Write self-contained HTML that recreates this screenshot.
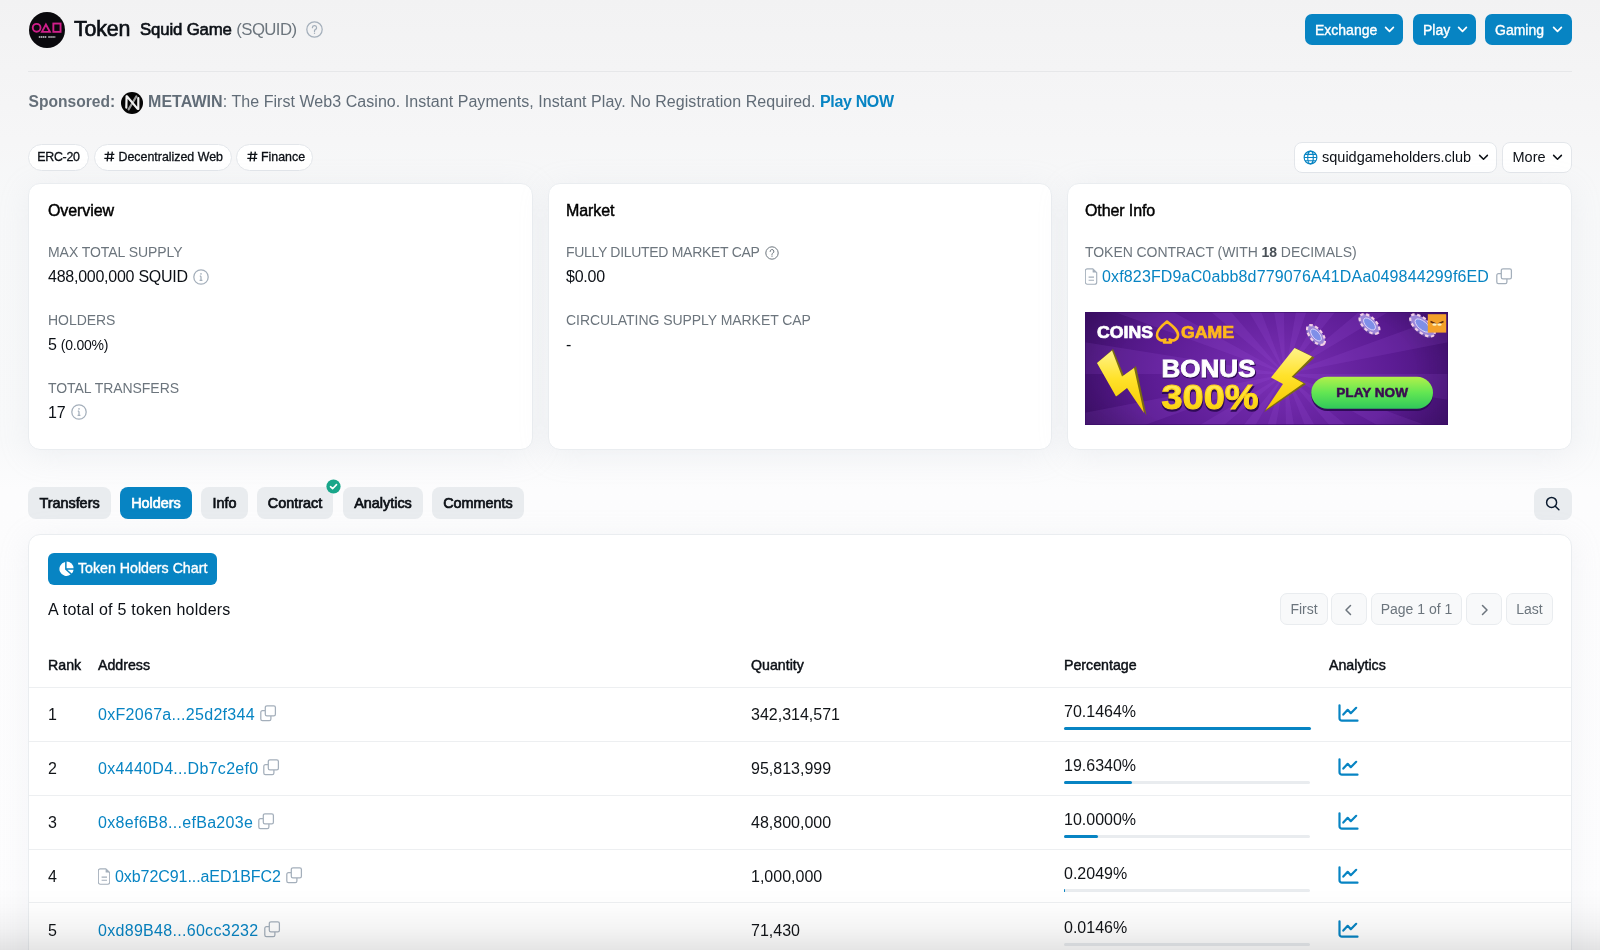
<!DOCTYPE html>
<html><head><meta charset="utf-8">
<style>
*{box-sizing:border-box;margin:0;padding:0}
html,body{width:1600px;height:950px;overflow:hidden}
body{font-family:"Liberation Sans",sans-serif;color:#081d35;position:relative;
background:linear-gradient(to bottom,#f2f2f3 0px,#f4f4f5 70px,#f6f6f7 140px,#f7f8f9 200px,#f8f9fa 440px,#fcfcfd 490px,#fdfdfe 950px)}
.a{position:absolute;white-space:nowrap}
.btnb{position:absolute;background:#0784c3;color:#fff;border-radius:7px;font-weight:normal;-webkit-text-stroke:0.35px #fff;font-size:14px;height:31px;line-height:32px;padding-left:10px}
.chev{position:absolute;width:7px;height:7px;border-right:1.6px solid currentColor;border-bottom:1.6px solid currentColor;transform:rotate(45deg)}
.pill{position:absolute;background:#fff;border:1px solid #e3e6ea;border-radius:14px;height:27px;top:143.5px;font-size:12.4px;font-weight:normal;-webkit-text-stroke:0.3px #0c1016;line-height:25px;color:#0c1016}
.hash{display:inline-block;font-size:14px;transform:skewX(-8deg);margin-right:1px}
.card{position:absolute;background:#fff;border:1px solid #eaedf0;border-radius:12px;box-shadow:0 5px 30px rgba(189,197,209,0.17)}
.ttl{position:absolute;font-size:16px;font-weight:normal;-webkit-text-stroke:0.45px #000;color:#000;letter-spacing:-0.1px}
.lbl{position:absolute;font-size:14px;color:#6c757d;letter-spacing:-0.05px;white-space:nowrap}
.val{position:absolute;font-size:16px;color:#0c1016;white-space:nowrap;letter-spacing:-0.25px}
.tab{position:absolute;top:487px;height:32.4px;background:#e9ecef;border-radius:8px;font-size:14.4px;font-weight:normal;-webkit-text-stroke:0.7px currentColor;line-height:32.4px;text-align:center;color:#0c1016}
.pg{position:absolute;top:593px;height:32px;background:#f8f9fa;border:1px solid #e9ecef;border-radius:7px;color:#6c757d;font-size:14px;line-height:31px;text-align:center}
.th{position:absolute;top:656.5px;font-size:14.2px;font-weight:normal;-webkit-text-stroke:0.45px #0c1016;color:#0c1016}
.rowline{position:absolute;left:29px;width:1542px;height:1px;background:#edeff1}
.cell{position:absolute;font-size:16px;color:#111418;white-space:nowrap;margin-top:0.6px}
.addr{color:#0784c3}
.bar{position:absolute;left:1064px;width:246px;height:3px;background:#e9ecef;border-radius:2px}
.bar i{position:absolute;left:0;top:0;height:3px;background:#0784c3;border-radius:2px}
</style></head><body><div id="wrap" style="position:absolute;left:0;top:0;width:1600px;height:950px;will-change:transform">

<!-- header -->
<div class="a" style="left:28.6px;top:11.5px;width:36.3px;height:36.3px;border-radius:50%;background:#0a090d">
  <svg width="36.3" height="36.3" viewBox="0 0 36.3 36.3" style="position:absolute;left:0;top:0">
    <circle cx="7.65" cy="15.8" r="3.9" fill="none" stroke="#cf1f8a" stroke-width="1.9"/>
    <path d="M12.9 19.9 L16.9 12.6 L20.9 19.9 Z" fill="none" stroke="#cf1f8a" stroke-width="1.9" stroke-linejoin="miter"/>
    <rect x="24.35" y="11.55" width="7.2" height="8.3" fill="none" stroke="#cf1f8a" stroke-width="1.9"/>
    <path d="M9.8 25 h16.5" stroke="#a0a0a4" stroke-width="1.9" stroke-dasharray="1.6 0.5 1.4 0.5 1.5 0.5 1.5 2 1.5 0.5 1.5 0.5 1.5 0.5 1.5"/>
  </svg>
</div>
<div class="a" style="left:74px;top:17px;font-size:21.4px;color:#0c1016;-webkit-text-stroke:0.65px #0c1016;letter-spacing:-0.15px">Token</div>
<div class="a" style="left:140px;top:20px;font-size:16.8px;color:#0c1016;-webkit-text-stroke:0.6px #0c1016;letter-spacing:-0.15px">Squid Game <span style="-webkit-text-stroke:0;color:#6c757d;letter-spacing:-0.6px">(SQUID)</span></div>
<svg class="a" style="left:306px;top:20.5px" width="17" height="17" viewBox="0 0 17 17"><circle cx="8.5" cy="8.5" r="7.7" fill="none" stroke="#a4afbb" stroke-width="1.25"/><path d="M6.4 6.7a2.1 2.1 0 1 1 2.9 1.9c-.5.3-.8.6-.8 1.2v.6" fill="none" stroke="#a4afbb" stroke-width="1.25" stroke-linecap="round"/><circle cx="8.5" cy="12.3" r=".7" fill="#a4afbb"/></svg>

<div class="btnb" style="left:1305px;top:14px;width:98px">Exchange</div><svg class="a" style="left:1384px;top:26px" width="11" height="7" viewBox="0 0 11 7"><path d="M1.6 1.4 L5.5 5.3 L9.4 1.4" fill="none" stroke="#fff" stroke-width="1.7" stroke-linecap="round" stroke-linejoin="round"/></svg>
<div class="btnb" style="left:1413px;top:14px;width:63px">Play</div><svg class="a" style="left:1457px;top:26px" width="11" height="7" viewBox="0 0 11 7"><path d="M1.6 1.4 L5.5 5.3 L9.4 1.4" fill="none" stroke="#fff" stroke-width="1.7" stroke-linecap="round" stroke-linejoin="round"/></svg>
<div class="btnb" style="left:1485px;top:14px;width:87px">Gaming</div><svg class="a" style="left:1552px;top:26px" width="11" height="7" viewBox="0 0 11 7"><path d="M1.6 1.4 L5.5 5.3 L9.4 1.4" fill="none" stroke="#fff" stroke-width="1.7" stroke-linecap="round" stroke-linejoin="round"/></svg>

<div class="a" style="left:28px;top:71px;width:1544px;height:1px;background:#e6e7e9"></div>

<!-- sponsored -->
<div class="a" style="left:28.5px;top:92px;font-size:15.6px;color:#656f79;line-height:20px;font-weight:bold">Sponsored:</div>
<div class="a" style="left:120.8px;top:91.8px;width:22px;height:22px;border-radius:50%;background:#050505">
  <svg width="22" height="22" viewBox="0 0 22 22" style="position:absolute;left:0;top:0"><path d="M15.4 4.4 L7.6 17.4" stroke="#9c9c9c" stroke-width="2.1" stroke-linecap="round"/><path d="M5.6 4.3 L5.3 15.6 M5.9 4.3 L16.6 16.9 M17.3 6 L17.3 16.9" fill="none" stroke="#f2f2f2" stroke-width="2.2" stroke-linecap="round" stroke-linejoin="round"/></svg>
</div>
<div class="a" style="left:148px;top:92px;font-size:16px;color:#616c77;line-height:20px;letter-spacing:0.05px"><b>METAWIN</b>: The First Web3 Casino. Instant Payments, Instant Play. No Registration Required. <span style="color:#0784c3;font-weight:bold;letter-spacing:-0.35px">Play NOW</span></div>

<!-- pills -->
<div class="pill" style="left:28px;width:61px;text-align:center;letter-spacing:-0.3px">ERC-20</div>
<div class="pill" style="left:94px;width:138px;padding-left:9px;line-height:24px"><svg style="display:inline-block;vertical-align:-1px;margin-right:3.5px" width="11" height="11" viewBox="0 0 11 11"><path d="M4.3 0.6 L3.1 10.4 M8.3 0.6 L7.1 10.4 M0.6 3.4 H10.4 M0.3 7.4 H10.1" fill="none" stroke="#0c1016" stroke-width="1.35"/></svg>Decentralized Web</div>
<div class="pill" style="left:236px;width:77px;padding-left:9.5px;line-height:24px"><svg style="display:inline-block;vertical-align:-1px;margin-right:3.5px" width="11" height="11" viewBox="0 0 11 11"><path d="M4.3 0.6 L3.1 10.4 M8.3 0.6 L7.1 10.4 M0.6 3.4 H10.4 M0.3 7.4 H10.1" fill="none" stroke="#0c1016" stroke-width="1.35"/></svg>Finance</div>

<div class="pill" style="left:1294px;top:141.5px;height:31px;line-height:29px;width:203px;border-radius:8px;font-size:14.5px;padding-left:27px;-webkit-text-stroke:0">squidgameholders.club
  <svg style="position:absolute;left:8px;top:7px" width="15" height="15" viewBox="0 0 16 16"><g fill="none" stroke="#0784c3" stroke-width="1.2"><circle cx="8" cy="8" r="6.8"/><ellipse cx="8" cy="8" rx="3" ry="6.8"/><path d="M1.2 8h13.6M2.2 4.6h11.6M2.2 11.4h11.6"/></g></svg>
</div><svg class="a" style="left:1478px;top:154px" width="11" height="7" viewBox="0 0 11 7"><path d="M1.6 1.4 L5.5 5.3 L9.4 1.4" fill="none" stroke="#0c1016" stroke-width="1.5" stroke-linecap="round" stroke-linejoin="round"/></svg>
<div class="pill" style="left:1502px;top:141.5px;height:31px;line-height:29px;width:70px;border-radius:8px;font-size:14.5px;padding-left:9.5px;-webkit-text-stroke:0">More</div><svg class="a" style="left:1552px;top:154px" width="11" height="7" viewBox="0 0 11 7"><path d="M1.6 1.4 L5.5 5.3 L9.4 1.4" fill="none" stroke="#0c1016" stroke-width="1.5" stroke-linecap="round" stroke-linejoin="round"/></svg>

<!-- cards -->
<div class="card" style="left:28px;top:182.5px;width:505px;height:267.5px"></div>
<div class="card" style="left:548px;top:182.5px;width:504px;height:267.5px"></div>
<div class="card" style="left:1066.5px;top:182.5px;width:505.5px;height:267.5px"></div>

<div class="ttl" style="left:48px;top:202px">Overview</div>
<div class="lbl" style="left:48px;top:244px">MAX TOTAL SUPPLY</div>
<div class="val" style="left:48px;top:268px">488,000,000 SQUID</div><svg class="a" style="left:193px;top:269px" width="16" height="16" viewBox="0 0 16 16"><circle cx="8" cy="8" r="7.2" fill="none" stroke="#a4afbb" stroke-width="1.25"/><path d="M8 7.2v4.2 M6.6 11.4h2.8 M6.8 7.2h1.2" fill="none" stroke="#a4afbb" stroke-width="1.25"/><circle cx="8" cy="4.9" r=".8" fill="#a4afbb"/></svg>
<div class="lbl" style="left:48px;top:312px">HOLDERS</div>
<div class="val" style="left:48px;top:336px">5 <span style="font-size:14px">(0.00%)</span></div>
<div class="lbl" style="left:48px;top:380px">TOTAL TRANSFERS</div>
<div class="val" style="left:48px;top:404px">17</div><svg class="a" style="left:70.5px;top:404px" width="16" height="16" viewBox="0 0 16 16"><circle cx="8" cy="8" r="7.2" fill="none" stroke="#a4afbb" stroke-width="1.25"/><path d="M8 7.2v4.2 M6.6 11.4h2.8 M6.8 7.2h1.2" fill="none" stroke="#a4afbb" stroke-width="1.25"/><circle cx="8" cy="4.9" r=".8" fill="#a4afbb"/></svg>

<div class="ttl" style="left:566px;top:202px">Market</div>
<div class="lbl" style="left:566px;top:244px;letter-spacing:-0.3px">FULLY DILUTED MARKET CAP</div><svg class="a" style="left:764.5px;top:245.5px" width="14" height="14" viewBox="0 0 14 14"><circle cx="7" cy="7" r="6.2" fill="none" stroke="#6c757d" stroke-width="1"/><path d="M5.1 5.5a1.9 1.9 0 1 1 2.6 1.7c-.45.25-.7.55-.7 1.05v.5" fill="none" stroke="#6c757d" stroke-width="1" stroke-linecap="round"/><circle cx="7" cy="10.2" r=".6" fill="#6c757d"/></svg>
<div class="val" style="left:566px;top:268px">$0.00</div>
<div class="lbl" style="left:566px;top:312px">CIRCULATING SUPPLY MARKET CAP</div>
<div class="val" style="left:566px;top:336px">-</div>

<div class="ttl" style="left:1085px;top:202px">Other Info</div>
<div class="lbl" style="left:1085px;top:244px">TOKEN CONTRACT (WITH <b style="color:#495057">18</b> DECIMALS)</div>
<svg class="a" style="left:1085px;top:268px" width="12.5" height="17" viewBox="0 0 12.5 17"><path d="M2.3 0.8h5.6l3.8 3.8v9.6a2 2 0 0 1-2 2H2.3a2 2 0 0 1-2-2V2.8a2 2 0 0 1 2-2z" fill="none" stroke="#a4afbb" stroke-width="1.15" stroke-linejoin="round"/><path d="M7.6 0.9v3.1a.6.6 0 0 0 .6.6h3.3z" fill="#a4afbb"/><path d="M3.6 9.1h5.4 M3.6 12.2h5.4" stroke="#a4afbb" stroke-width="1.1"/></svg><div class="val addr" style="left:1102px;top:268px;letter-spacing:0.15px">0xf823FD9aC0abb8d779076A41DAa049844299f6ED</div><svg class="a" style="left:1496px;top:268px" width="17" height="17" viewBox="0 0 17 17"><path d="M6.9 0.8h6.9a1.6 1.6 0 0 1 1.6 1.6v6.9a1.6 1.6 0 0 1-1.6 1.6H6.9a1.6 1.6 0 0 1-1.6-1.6V2.4a1.6 1.6 0 0 1 1.6-1.6z M5.3 5.6H2.4a1.6 1.6 0 0 0-1.6 1.6v6.9a1.6 1.6 0 0 0 1.6 1.6h6.9a1.6 1.6 0 0 0 1.6-1.6V10.9" fill="none" stroke="#a4afbb" stroke-width="1.25"/></svg>

<!-- banner -->
<svg class="a" style="left:1085px;top:312px" width="363" height="113" viewBox="0 0 363 113">
<defs>
<radialGradient id="bg1" cx="0.52" cy="0.55" r="0.6" gradientTransform="translate(0.5 0.55) scale(1 2.2) translate(-0.5 -0.55)"><stop offset="0" stop-color="#7b30b6"/><stop offset="0.55" stop-color="#5c1c94"/><stop offset="1" stop-color="#3e0f6a"/></radialGradient>
<radialGradient id="vig" cx="0.5" cy="0.5" r="0.75" gradientTransform="translate(0.5 0.5) scale(1 1.6) translate(-0.5 -0.5)"><stop offset="0.55" stop-color="#1a0530" stop-opacity="0"/><stop offset="1" stop-color="#1a0530" stop-opacity="0.45"/></radialGradient>
<linearGradient id="gb" x1="0" y1="0" x2="0" y2="1"><stop offset="0" stop-color="#b2f04a"/><stop offset="0.5" stop-color="#62e653"/><stop offset="1" stop-color="#30c85a"/></linearGradient>
<linearGradient id="yl" x1="0" y1="0" x2="0" y2="1"><stop offset="0" stop-color="#fff38a"/><stop offset="0.45" stop-color="#ffe22a"/><stop offset="1" stop-color="#f5c800"/></linearGradient>
</defs>
<rect width="363" height="113" fill="url(#bg1)"/>
<path d="M200 62 L600.0 62.0 L595.1 124.6Z M200 62 L575.9 198.8 L549.8 255.9Z M200 62 L506.4 319.1 L462.4 363.9Z M200 62 L400.0 408.4 L343.3 435.4Z M200 62 L269.5 455.9 L207.0 461.9Z M200 62 L130.5 455.9 L69.8 440.2Z M200 62 L0.0 408.4 L-51.7 372.9Z M200 62 L-106.4 319.1 L-142.9 268.0Z M200 62 L-175.9 198.8 L-192.7 138.3Z M200 62 L-200.0 62.0 L-195.1 -0.6Z M200 62 L-175.9 -74.8 L-149.8 -131.9Z M200 62 L-106.4 -195.1 L-62.4 -239.9Z M200 62 L-0.0 -284.4 L56.7 -311.4Z M200 62 L130.5 -331.9 L193.0 -337.9Z M200 62 L269.5 -331.9 L330.2 -316.2Z M200 62 L400.0 -284.4 L451.7 -248.9Z M200 62 L506.4 -195.1 L542.9 -144.0Z M200 62 L575.9 -74.8 L592.7 -14.3Z" fill="#a055e0" opacity="0.16"/><rect width="363" height="113" fill="url(#vig)"/>
<rect width="363" height="113" fill="none" stroke="#3a0c66" stroke-width="1.2"/>
<text x="12" y="26" font-family="Liberation Sans" font-weight="bold" font-size="16.5" fill="#ffffff" stroke="#ffffff" stroke-width="0.7" textLength="56" lengthAdjust="spacingAndGlyphs">COINS</text>
<path d="M82 9.5 C75 15 71.5 19 72 23.5 C72.5 28 77 29.5 80.5 27.5 L79 30.5 L86 30.5 L84.5 27.5 C88 29.5 92.5 28 93 23.5 C93.5 19 89 15 82 9.5Z" fill="none" stroke="#ffb81c" stroke-width="2.6" stroke-linejoin="round"/>
<text x="96" y="26" font-family="Liberation Sans" font-weight="bold" font-size="16.5" fill="#ffb81c" stroke="#ffb81c" stroke-width="0.7" textLength="53" lengthAdjust="spacingAndGlyphs">GAME</text>
<path d="M12 51 L28 37 L39 64 L51 54 L61.5 103.5 L43.5 74.5 L32.5 84 Z" fill="#7a6a10"/>
<path d="M12 51 L27 38.5 L37 64.5 L49 56 L59 101 L42 76 L31 84.5 Z" fill="url(#yl)"/>
<path d="M210.5 36 L229.6 45.6 L208.6 64.7 L221 72 L179 100.2 L200 72 L187.5 65.4 Z" fill="#7a6a10"/>
<path d="M209.5 36 L227 44.6 L206.6 64.7 L218.5 71.2 L180.5 98 L198 72 L186 65.4 Z" fill="url(#yl)"/>
<text x="76.5" y="66" font-family="Liberation Sans" font-weight="bold" font-size="24" fill="#2e0a55" stroke="#2e0a55" stroke-width="1.2" textLength="95" lengthAdjust="spacingAndGlyphs">BONUS</text>
<text x="76.5" y="64.5" font-family="Liberation Sans" font-weight="bold" font-size="24" fill="#ffffff" stroke="#ffffff" stroke-width="0.9" textLength="94" lengthAdjust="spacingAndGlyphs">BONUS</text>
<text x="76.5" y="99" font-family="Liberation Sans" font-weight="bold" font-size="35" fill="#2e0a55" stroke="#2e0a55" stroke-width="1.6" textLength="98" lengthAdjust="spacingAndGlyphs">300%</text>
<text x="76.5" y="97" font-family="Liberation Sans" font-weight="bold" font-size="35" fill="url(#yl)" stroke="#ffd21a" stroke-width="1.1" textLength="97" lengthAdjust="spacingAndGlyphs">300%</text>
<g transform="translate(231 23) rotate(50)"><ellipse cx="0" cy="1.5" rx="12" ry="6" fill="#6a4aa8"/><ellipse cx="0" cy="0" rx="12" ry="6" fill="#9c86d8" stroke="#f4d0e6" stroke-width="2.2" stroke-dasharray="3.5 2.5"/><ellipse cx="0" cy="0" rx="7.199999999999999" ry="3.5999999999999996" fill="#7f8fe8" stroke="#e8e0ff" stroke-width="0.8"/></g>
<g transform="translate(284.5 12) rotate(45)"><ellipse cx="0" cy="1.5" rx="12.5" ry="6.5" fill="#6a4aa8"/><ellipse cx="0" cy="0" rx="12.5" ry="6.5" fill="#9c86d8" stroke="#f4d0e6" stroke-width="2.2" stroke-dasharray="3.5 2.5"/><ellipse cx="0" cy="0" rx="7.5" ry="3.9" fill="#7f8fe8" stroke="#e8e0ff" stroke-width="0.8"/></g>
<g transform="translate(337.5 13.5) rotate(40)"><ellipse cx="0" cy="1.5" rx="15" ry="7" fill="#6a4aa8"/><ellipse cx="0" cy="0" rx="15" ry="7" fill="#9c86d8" stroke="#f4d0e6" stroke-width="2.2" stroke-dasharray="3.5 2.5"/><ellipse cx="0" cy="0" rx="9.0" ry="4.2" fill="#7f8fe8" stroke="#e8e0ff" stroke-width="0.8"/></g>
<rect x="342.8" y="2.2" width="18.4" height="18.4" fill="#f4a12a"/>
<path d="M345.5 9.5 L351 12 M358.5 9.5 L353 12" stroke="#5a2a10" stroke-width="1.4"/>
<ellipse cx="349.5" cy="12.5" rx="2.2" ry="1.2" fill="#fff3c0"/><ellipse cx="354.5" cy="12.5" rx="2.2" ry="1.2" fill="#fff3c0"/>
<rect x="226.3" y="66.5" width="121.7" height="32.5" rx="16.2" fill="#2f0b58"/>
<rect x="226.3" y="64.7" width="121.7" height="32" rx="16" fill="url(#gb)"/>
<text x="251.3" y="85.2" font-family="Liberation Sans" font-weight="bold" font-size="13" fill="#3a0c50" stroke="#3a0c50" stroke-width="0.5" textLength="71.7" lengthAdjust="spacingAndGlyphs">PLAY NOW</text>
</svg>

<!-- tabs -->
<div class="tab" style="left:28px;width:83px">Transfers</div>
<div class="tab" style="left:120px;width:72px;background:#0784c3;color:#fff">Holders</div>
<div class="tab" style="left:201px;width:47px">Info</div>
<div class="tab" style="left:257px;width:76px">Contract</div>
<svg class="a" style="left:326.4px;top:479.2px" width="15" height="15" viewBox="0 0 15 15"><circle cx="7.5" cy="7.5" r="7.1" fill="#19a68a"/><path d="M4.5 7.7l2.1 2 3.9-4.1" fill="none" stroke="#fff" stroke-width="1.6" stroke-linecap="round" stroke-linejoin="round"/></svg>
<div class="tab" style="left:343px;width:80px">Analytics</div>
<div class="tab" style="left:432px;width:92px">Comments</div>
<div class="a" style="left:1534px;top:488px;width:38px;height:32px;background:#e9ecef;border-radius:8px"></div><svg class="a" style="left:1545px;top:496px" width="16" height="16" viewBox="0 0 16 16"><circle cx="6.6" cy="6.4" r="5" fill="none" stroke="#0a1a2e" stroke-width="1.45"/><path d="M10.3 10.2l3.6 3.6" stroke="#0a1a2e" stroke-width="1.5" stroke-linecap="round"/></svg>

<!-- table card -->
<div class="card" style="left:28px;top:534px;width:1544px;height:500px"></div>
<div class="a" style="left:48px;top:553px;width:169px;height:32px;background:#0784c3;border-radius:6px;color:#fff;font-size:14.2px;font-weight:normal;-webkit-text-stroke:0.35px #fff;line-height:31px;padding-left:30px">Token Holders Chart</div><svg class="a" style="left:57.6px;top:560.8px" width="16" height="16" viewBox="0 0 16 16"><path d="M7.1 1.1A7 7 0 1 0 12.6 13.6L7.1 8.6Z" fill="#fff"/><path d="M8.6 0.4A7 7 0 0 1 15.6 7.3H8.6Z" fill="#fff"/><path d="M9.4 8.7H15.6A7 7 0 0 1 13.7 12.6Z" fill="#fff"/></svg>
<div class="val" style="left:48px;top:600.5px;letter-spacing:0.25px">A total of 5 token holders</div>

<div class="pg" style="left:1280px;width:48px">First</div>
<div class="pg" style="left:1331px;width:36px"></div>
<div class="pg" style="left:1371px;width:91px">Page 1 of 1</div>
<div class="pg" style="left:1466px;width:36px"></div>
<div class="pg" style="left:1506px;width:47px">Last</div><svg class="a" style="left:1344px;top:603.5px" width="9" height="12" viewBox="0 0 9 12"><path d="M6.5 1.5L2 6l4.5 4.5" fill="none" stroke="#6c757d" stroke-width="1.5" stroke-linecap="round" stroke-linejoin="round"/></svg><svg class="a" style="left:1480px;top:603.5px" width="9" height="12" viewBox="0 0 9 12"><path d="M2.5 1.5L7 6l-4.5 4.5" fill="none" stroke="#6c757d" stroke-width="1.5" stroke-linecap="round" stroke-linejoin="round"/></svg>

<div class="th" style="left:48px">Rank</div>
<div class="th" style="left:98px">Address</div>
<div class="th" style="left:751px">Quantity</div>
<div class="th" style="left:1064px">Percentage</div>
<div class="th" style="left:1329px">Analytics</div>

<div class="rowline" style="top:687px"></div>
<div class="rowline" style="top:741px"></div>
<div class="rowline" style="top:795px"></div>
<div class="rowline" style="top:849px"></div>
<div class="rowline" style="top:902px"></div>

<div class="cell" style="left:48px;top:705px">1</div>
<div class="cell addr cpy" style="left:98px;top:705px;letter-spacing:0.3px">0xF2067a...25d2f344<svg style="position:absolute;right:-22px;top:-0.5px" width="17" height="17" viewBox="0 0 17 17"><path d="M6.9 0.8h6.9a1.6 1.6 0 0 1 1.6 1.6v6.9a1.6 1.6 0 0 1-1.6 1.6H6.9a1.6 1.6 0 0 1-1.6-1.6V2.4a1.6 1.6 0 0 1 1.6-1.6z M5.3 5.6H2.4a1.6 1.6 0 0 0-1.6 1.6v6.9a1.6 1.6 0 0 0 1.6 1.6h6.9a1.6 1.6 0 0 0 1.6-1.6V10.9" fill="none" stroke="#a4afbb" stroke-width="1.25"/></svg></div>
<div class="cell" style="left:751px;top:705px">342,314,571</div>
<div class="cell" style="left:1064px;top:702px">70.1464%</div>
<div class="bar" style="top:727px"><i style="width:246.6px"></i></div>
<svg class="a" style="left:1337px;top:704px" width="23" height="20" viewBox="0 0 23 20"><path d="M2.5 1.3V14.2a2.5 2.5 0 0 0 2.5 2.5H20.5" fill="none" stroke="#0784c3" stroke-width="2.2" stroke-linecap="round"/><path d="M6.3 10.6L10.7 5.8L13.8 9.2L19.2 3.8" fill="none" stroke="#0784c3" stroke-width="2.2" stroke-linecap="round" stroke-linejoin="round"/></svg>
<div class="cell" style="left:48px;top:759px">2</div>
<div class="cell addr cpy" style="left:98px;top:759px;letter-spacing:0.3px">0x4440D4...Db7c2ef0<svg style="position:absolute;right:-22px;top:-0.5px" width="17" height="17" viewBox="0 0 17 17"><path d="M6.9 0.8h6.9a1.6 1.6 0 0 1 1.6 1.6v6.9a1.6 1.6 0 0 1-1.6 1.6H6.9a1.6 1.6 0 0 1-1.6-1.6V2.4a1.6 1.6 0 0 1 1.6-1.6z M5.3 5.6H2.4a1.6 1.6 0 0 0-1.6 1.6v6.9a1.6 1.6 0 0 0 1.6 1.6h6.9a1.6 1.6 0 0 0 1.6-1.6V10.9" fill="none" stroke="#a4afbb" stroke-width="1.25"/></svg></div>
<div class="cell" style="left:751px;top:759px">95,813,999</div>
<div class="cell" style="left:1064px;top:756px">19.6340%</div>
<div class="bar" style="top:781px"><i style="width:68.4px"></i></div>
<svg class="a" style="left:1337px;top:758px" width="23" height="20" viewBox="0 0 23 20"><path d="M2.5 1.3V14.2a2.5 2.5 0 0 0 2.5 2.5H20.5" fill="none" stroke="#0784c3" stroke-width="2.2" stroke-linecap="round"/><path d="M6.3 10.6L10.7 5.8L13.8 9.2L19.2 3.8" fill="none" stroke="#0784c3" stroke-width="2.2" stroke-linecap="round" stroke-linejoin="round"/></svg>
<div class="cell" style="left:48px;top:813px">3</div>
<div class="cell addr cpy" style="left:98px;top:813px;letter-spacing:0.3px">0x8ef6B8...efBa203e<svg style="position:absolute;right:-22px;top:-0.5px" width="17" height="17" viewBox="0 0 17 17"><path d="M6.9 0.8h6.9a1.6 1.6 0 0 1 1.6 1.6v6.9a1.6 1.6 0 0 1-1.6 1.6H6.9a1.6 1.6 0 0 1-1.6-1.6V2.4a1.6 1.6 0 0 1 1.6-1.6z M5.3 5.6H2.4a1.6 1.6 0 0 0-1.6 1.6v6.9a1.6 1.6 0 0 0 1.6 1.6h6.9a1.6 1.6 0 0 0 1.6-1.6V10.9" fill="none" stroke="#a4afbb" stroke-width="1.25"/></svg></div>
<div class="cell" style="left:751px;top:813px">48,800,000</div>
<div class="cell" style="left:1064px;top:810px">10.0000%</div>
<div class="bar" style="top:835px"><i style="width:34.2px"></i></div>
<svg class="a" style="left:1337px;top:812px" width="23" height="20" viewBox="0 0 23 20"><path d="M2.5 1.3V14.2a2.5 2.5 0 0 0 2.5 2.5H20.5" fill="none" stroke="#0784c3" stroke-width="2.2" stroke-linecap="round"/><path d="M6.3 10.6L10.7 5.8L13.8 9.2L19.2 3.8" fill="none" stroke="#0784c3" stroke-width="2.2" stroke-linecap="round" stroke-linejoin="round"/></svg>
<div class="cell" style="left:48px;top:867px">4</div>
<svg class="a" style="left:97.5px;top:868px" width="12.5" height="17" viewBox="0 0 12.5 17"><path d="M2.3 0.8h5.6l3.8 3.8v9.6a2 2 0 0 1-2 2H2.3a2 2 0 0 1-2-2V2.8a2 2 0 0 1 2-2z" fill="none" stroke="#a4afbb" stroke-width="1.15" stroke-linejoin="round"/><path d="M7.6 0.9v3.1a.6.6 0 0 0 .6.6h3.3z" fill="#a4afbb"/><path d="M3.6 9.1h5.4 M3.6 12.2h5.4" stroke="#a4afbb" stroke-width="1.1"/></svg>
<div class="cell addr cpy" style="left:115px;top:867px;letter-spacing:-0.07px">0xb72C91...aED1BFC2<svg style="position:absolute;right:-22px;top:-0.5px" width="17" height="17" viewBox="0 0 17 17"><path d="M6.9 0.8h6.9a1.6 1.6 0 0 1 1.6 1.6v6.9a1.6 1.6 0 0 1-1.6 1.6H6.9a1.6 1.6 0 0 1-1.6-1.6V2.4a1.6 1.6 0 0 1 1.6-1.6z M5.3 5.6H2.4a1.6 1.6 0 0 0-1.6 1.6v6.9a1.6 1.6 0 0 0 1.6 1.6h6.9a1.6 1.6 0 0 0 1.6-1.6V10.9" fill="none" stroke="#a4afbb" stroke-width="1.25"/></svg></div>
<div class="cell" style="left:751px;top:867px">1,000,000</div>
<div class="cell" style="left:1064px;top:864px">0.2049%</div>
<div class="bar" style="top:889px"><i style="width:1px"></i></div>
<svg class="a" style="left:1337px;top:866px" width="23" height="20" viewBox="0 0 23 20"><path d="M2.5 1.3V14.2a2.5 2.5 0 0 0 2.5 2.5H20.5" fill="none" stroke="#0784c3" stroke-width="2.2" stroke-linecap="round"/><path d="M6.3 10.6L10.7 5.8L13.8 9.2L19.2 3.8" fill="none" stroke="#0784c3" stroke-width="2.2" stroke-linecap="round" stroke-linejoin="round"/></svg>
<div class="cell" style="left:48px;top:921px">5</div>
<div class="cell addr cpy" style="left:98px;top:921px;letter-spacing:0.3px">0xd89B48...60cc3232<svg style="position:absolute;right:-22px;top:-0.5px" width="17" height="17" viewBox="0 0 17 17"><path d="M6.9 0.8h6.9a1.6 1.6 0 0 1 1.6 1.6v6.9a1.6 1.6 0 0 1-1.6 1.6H6.9a1.6 1.6 0 0 1-1.6-1.6V2.4a1.6 1.6 0 0 1 1.6-1.6z M5.3 5.6H2.4a1.6 1.6 0 0 0-1.6 1.6v6.9a1.6 1.6 0 0 0 1.6 1.6h6.9a1.6 1.6 0 0 0 1.6-1.6V10.9" fill="none" stroke="#a4afbb" stroke-width="1.25"/></svg></div>
<div class="cell" style="left:751px;top:921px">71,430</div>
<div class="cell" style="left:1064px;top:918px">0.0146%</div>
<div class="bar" style="top:943px"><i style="width:0px"></i></div>
<svg class="a" style="left:1337px;top:920px" width="23" height="20" viewBox="0 0 23 20"><path d="M2.5 1.3V14.2a2.5 2.5 0 0 0 2.5 2.5H20.5" fill="none" stroke="#0784c3" stroke-width="2.2" stroke-linecap="round"/><path d="M6.3 10.6L10.7 5.8L13.8 9.2L19.2 3.8" fill="none" stroke="#0784c3" stroke-width="2.2" stroke-linecap="round" stroke-linejoin="round"/></svg>

<div class="a" style="left:0;top:888px;width:1600px;height:62px;background:linear-gradient(to bottom,rgba(0,0,0,0) 0%,rgba(0,0,0,0.012) 30%,rgba(0,0,0,0.045) 65%,rgba(0,0,0,0.1) 100%);pointer-events:none"></div>
</div></body></html>
